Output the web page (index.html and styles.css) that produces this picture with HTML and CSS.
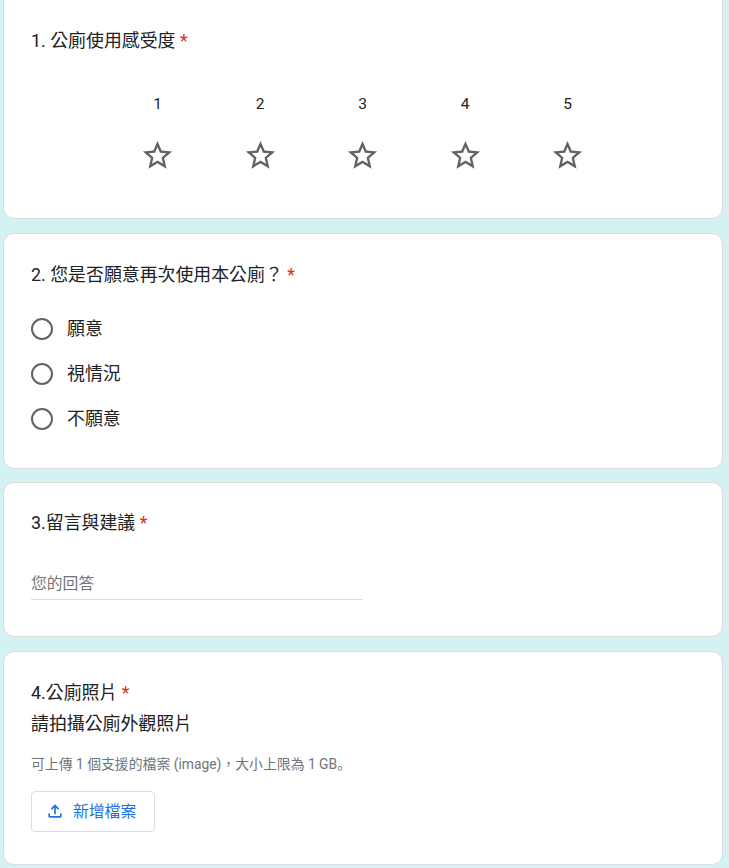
FILE: index.html
```html
<!DOCTYPE html>
<html lang="zh-Hant">
<head>
    <meta charset="UTF-8">
    <meta name="viewport" content="width=device-width, initial-scale=1.0">
    <title>公廁使用感受度</title>
    <link rel="stylesheet" href="styles.css">
</head>
<body>
    <main class="form">
        <section class="card card-rating">
            <h2 class="question">1. 公廁使用感受度 <span class="required">*</span></h2>
            <div class="rating">
                <div class="rating-item">
                    <span class="rating-label">1</span>
                    <svg class="star" viewBox="0 0 24 24"><path d="M22 9.24l-7.19-.62L12 2 9.19 8.63 2 9.24l5.46 4.73L5.82 21 12 17.27 18.18 21l-1.63-7.03L22 9.24zM12 15.4l-3.76 2.27 1-4.28-3.32-2.88 4.38-.38L12 6.1l1.71 4.04 4.38.38-3.32 2.88 1 4.28L12 15.4z"/></svg>
                </div>
                <div class="rating-item">
                    <span class="rating-label">2</span>
                    <svg class="star" viewBox="0 0 24 24"><path d="M22 9.24l-7.19-.62L12 2 9.19 8.63 2 9.24l5.46 4.73L5.82 21 12 17.27 18.18 21l-1.63-7.03L22 9.24zM12 15.4l-3.76 2.27 1-4.28-3.32-2.88 4.38-.38L12 6.1l1.71 4.04 4.38.38-3.32 2.88 1 4.28L12 15.4z"/></svg>
                </div>
                <div class="rating-item">
                    <span class="rating-label">3</span>
                    <svg class="star" viewBox="0 0 24 24"><path d="M22 9.24l-7.19-.62L12 2 9.19 8.63 2 9.24l5.46 4.73L5.82 21 12 17.27 18.18 21l-1.63-7.03L22 9.24zM12 15.4l-3.76 2.27 1-4.28-3.32-2.88 4.38-.38L12 6.1l1.71 4.04 4.38.38-3.32 2.88 1 4.28L12 15.4z"/></svg>
                </div>
                <div class="rating-item">
                    <span class="rating-label">4</span>
                    <svg class="star" viewBox="0 0 24 24"><path d="M22 9.24l-7.19-.62L12 2 9.19 8.63 2 9.24l5.46 4.73L5.82 21 12 17.27 18.18 21l-1.63-7.03L22 9.24zM12 15.4l-3.76 2.27 1-4.28-3.32-2.88 4.38-.38L12 6.1l1.71 4.04 4.38.38-3.32 2.88 1 4.28L12 15.4z"/></svg>
                </div>
                <div class="rating-item">
                    <span class="rating-label">5</span>
                    <svg class="star" viewBox="0 0 24 24"><path d="M22 9.24l-7.19-.62L12 2 9.19 8.63 2 9.24l5.46 4.73L5.82 21 12 17.27 18.18 21l-1.63-7.03L22 9.24zM12 15.4l-3.76 2.27 1-4.28-3.32-2.88 4.38-.38L12 6.1l1.71 4.04 4.38.38-3.32 2.88 1 4.28L12 15.4z"/></svg>
                </div>
            </div>
        </section>

        <section class="card card-choice">
            <h2 class="question">2. 您是否願意再次使用本公廁？ <span class="required">*</span></h2>
            <div class="choices">
                <div class="choice"><span class="radio"></span><span>願意</span></div>
                <div class="choice"><span class="radio"></span><span>視情況</span></div>
                <div class="choice"><span class="radio"></span><span>不願意</span></div>
            </div>
        </section>

        <section class="card card-text">
            <h2 class="question">3.留言與建議 <span class="required">*</span></h2>
            <div class="answer">您的回答</div>
        </section>

        <section class="card card-upload">
            <h2 class="question">4.公廁照片 <span class="required">*</span></h2>
            <p class="description">請拍攝公廁外觀照片</p>
            <p class="hint">可上傳 1 個支援的檔案 (image)<span class="low-punct">，</span>大小上限為 1 GB<span class="low-punct">。</span></p>
            <button class="upload-button" type="button">
                <svg class="upload-icon" viewBox="0 0 24 24"><path d="M18 15v3H6v-3H4v3c0 1.1.9 2 2 2h12c1.100 0 2-.9 2-2v-3h-2zM7 9l1.410 1.410L11 7.830V16h2V7.830l2.590 2.580L17 9l-5-5-5 5z"/></svg>
                <span>新增檔案</span>
            </button>
        </section>
    </main>
</body>
</html>
```

FILE: styles.css
```css
html, body {
    height: 100%;
    overflow: hidden;
}

body {
    background-color: #d4f2f2;
    font-family: Roboto, "Noto Sans CJK TC", sans-serif;
    color: #202124;
    margin: 0;
}

.form {
    display: flex;
    flex-direction: column;
    gap: 14px;
    width: 720px;
    margin: -10px 0 0 3px;
}

.card {
    box-sizing: border-box;
    background: #ffffff;
    border: 1px solid #dadce0;
    border-radius: 11px;
    padding: 0 27px;
}

.card-rating {
    height: 229px;
    padding-top: 38px;
}

.card-choice {
    height: 236px;
    margin-bottom: -1px;
    padding-top: 29px;
}

.card-text {
    height: 155px;
    padding-top: 28px;
}

.card-upload {
    height: 214px;
    padding-top: 29px;
}

.question {
    font-size: 17.9px;
    font-weight: 400;
    line-height: 24px;
    margin: 0;
}

.required {
    color: #d93025;
}

.rating {
    display: grid;
    grid-template-columns: repeat(5, 102.5px);
    justify-content: center;
    margin: 41px 1px 0 0;
}

.rating-item {
    display: flex;
    flex-direction: column;
    align-items: center;
}

.rating-label {
    font-size: 15.5px;
    line-height: 20px;
}

.star {
    width: 35px;
    height: 35px;
    margin-top: 24px;
    fill: #5f6368;
}

.choices {
    display: flex;
    flex-direction: column;
    gap: 21px;
    margin-top: 30px;
}

.choice {
    display: flex;
    align-items: center;
    gap: 14px;
    font-size: 17.9px;
    line-height: 24px;
}

.radio {
    box-sizing: border-box;
    width: 22px;
    height: 22px;
    border: 2px solid #5f6368;
    border-radius: 50%;
}

.answer {
    width: 332px;
    margin-top: 37px;
    padding-bottom: 3px;
    border-bottom: 1px solid #dadce0;
    color: #70757a;
    font-size: 15.8px;
    line-height: 24px;
}

.description {
    font-size: 17.9px;
    line-height: 24px;
    margin: 7px 0 0;
}

.hint {
    color: #70757a;
    font-size: 13.85px;
    line-height: 18px;
    margin: 18px 0 0;
}

/* comma and full stop sit low in this font variant */
.low-punct {
    font-family: "Noto Sans CJK SC", sans-serif;
}

.upload-button {
    display: flex;
    align-items: center;
    gap: 8px;
    box-sizing: border-box;
    width: 124px;
    height: 41px;
    margin-top: 18px;
    padding: 0 0 2px 13px;
    background: #ffffff;
    border: 1px solid #dadce0;
    border-radius: 4px;
    color: #1a73e8;
    font-family: inherit;
    font-size: 15.8px;
}

.upload-icon {
    width: 20px;
    height: 20px;
    fill: #1a73e8;
}
```
